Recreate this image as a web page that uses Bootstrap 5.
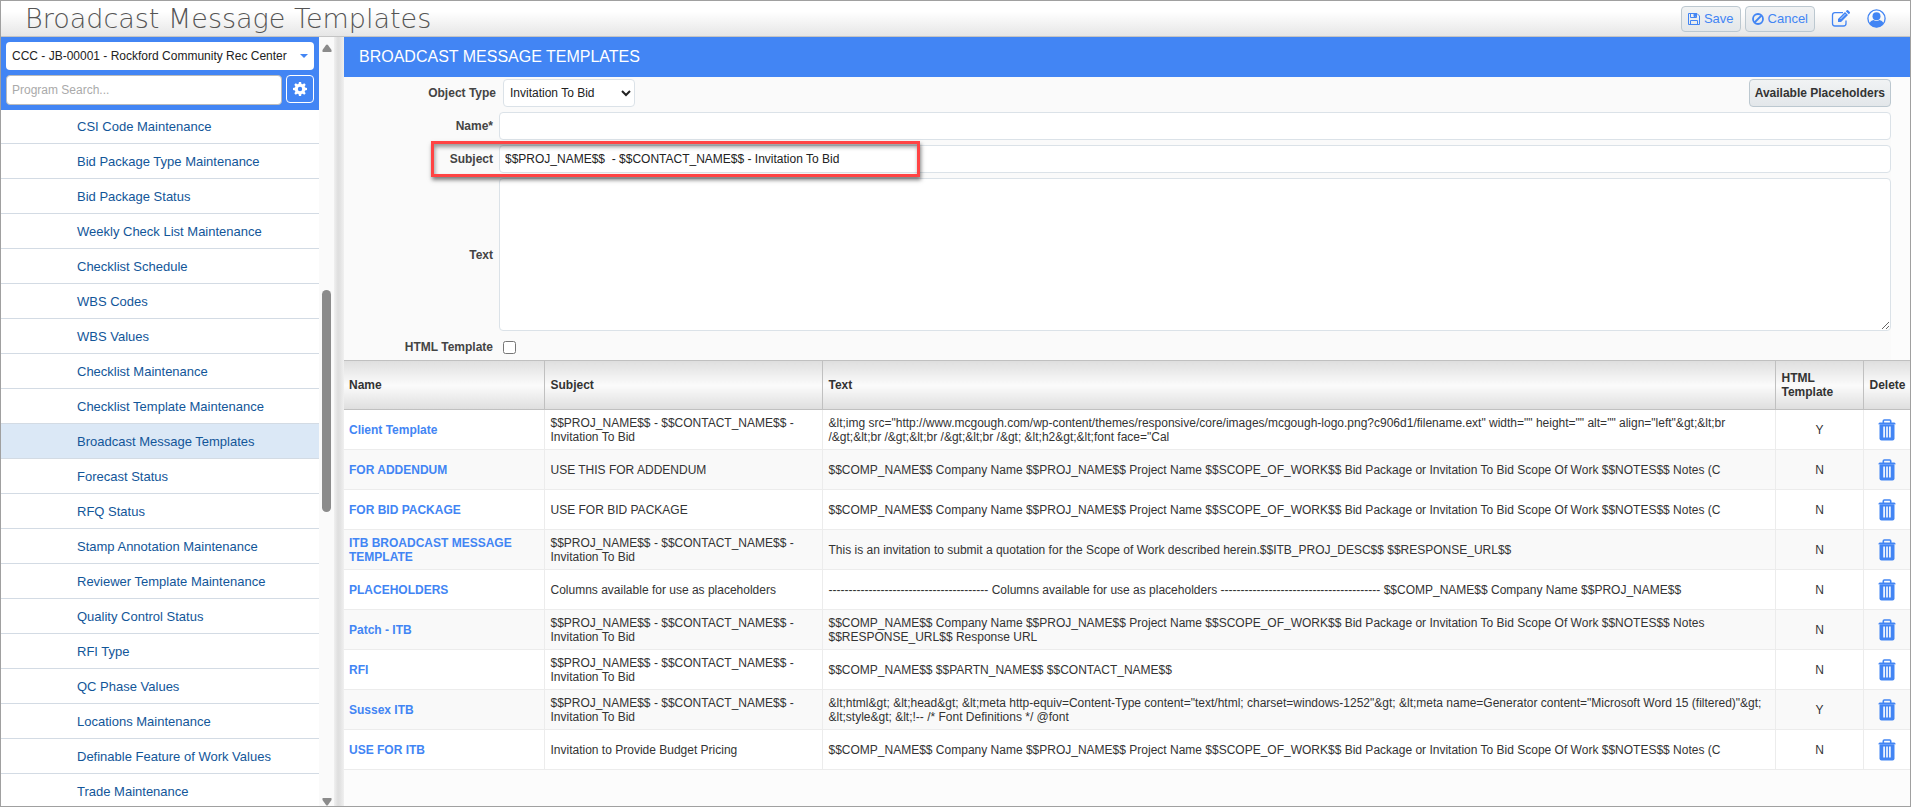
<!DOCTYPE html>
<html lang="en">
<head>
<meta charset="utf-8">
<meta name="viewport" content="width=device-width, initial-scale=1">
<title>Broadcast Message Templates</title>
<link rel="stylesheet" href="https://cdn.jsdelivr.net/npm/bootstrap@5.3.0/dist/css/bootstrap.min.css">
<style>
:root { --brand: #4285f4; --edge: #a0a0a0; }
body { font-family: "Liberation Sans", Arial, sans-serif; font-size: 12px; line-height: 14px; color: #333; background: #fcfcfc; }
.app-frame { border: 1px solid var(--edge); }
.app-header { height: 36px; border-bottom: 1px solid #c4c4c4; background: linear-gradient(#fff 30%, #e6e6e6); }
.app-title { font-family: "DejaVu Sans", sans-serif; font-weight: 200; font-size: 27px; line-height: 34px; color: #555; }
.tool-btn { height: 26px; padding: 0 6px; font-size: 13px; line-height: 14px; color: var(--brand); background: linear-gradient(#f1f3f4, #e3e7ea); border: 1px solid #bcc8d0; border-radius: 4px; }
.icon-btn { color: var(--brand); padding: 0; border: 0; background: none; }
.side-panel { width: 318px; background: #fff; }
.side-top { background: var(--brand); padding: 5px; }
.side-tools { margin-top: 5px; }
.job-picker { height: 28px; font-size: 12px; line-height: 18px; padding: 0 6px; color: #222; background: #fff; border: 0; border-radius: 4px; }
.prog-search { height: 30px; font-size: 12px; padding: 0 5px; border: 1px solid #bbb; border-radius: 4px; }
.prog-search::placeholder { color: #aaa; }
.gear-btn { width: 28px; height: 28px; padding: 0; color: #fff; background: none; border: 1px solid #fff; border-radius: 4px; }
.side-link { display: block; height: 35px; padding: 10px 0 0 76px; font-size: 13px; line-height: 16px; color: #125699; text-decoration: none; border-bottom: 1px solid #d3dbe4; }
.side-link.current { background: #dbe8f6; }
.side-list { margin-top: -1px; }
.scroll-rail { width: 15px; background: #fafafa; padding: 7px 0 0; }
.scroll-thumb { width: 9px; height: 222px; border-radius: 5px; background: #8b8b8b; }
.scroll-space { flex: 238 0 0; }
.scroll-rest { flex: 285 0 0; }
.splitter { width: 10px; background: linear-gradient(90deg, #f0f0f0, #dedede 40%, #e2e2e2 60%, #f0f0f0); }
.page-title { height: 40px; padding: 0 15px; font-size: 16px; line-height: 40px; color: #fff; background: var(--brand); }
.form-area { background: #fafafa; margin-right: 19px; padding-top: 2px; }
.field-row { margin-bottom: 5px; }
.check-row { padding: 9px 0 6px; }
.field-label { width: 155px; padding-right: 6px; text-align: right; font-weight: 700; color: #444; }
.field-label.near { padding-right: 3px; }
.field-box { font-size: 12px; line-height: 14px; color: #222; padding: 0 5px; border: 1px solid #dbe2e8; border-radius: 4px; background: #fff; }
.field-line { height: 28px; }
.field-area { height: 153px; }
.type-select { width: 132px; height: 28px; padding: 0 2px; }
.tpl-check { width: 13px; height: 13px; }
.avail-btn { height: 28px; padding: 0 5px; font-size: 12px; font-weight: 700; color: #333; background: linear-gradient(#f1f3f4, #e3e7ea); border: 1px solid #bcc8d0; border-radius: 4px; }
.callout-box { position: absolute; left: 87px; top: -4px; width: 489px; height: 36px; border: 3px solid #f44; box-shadow: 1px 3px 4px rgba(0,0,0,.5), inset 1px 3px 4px rgba(0,0,0,.4); pointer-events: none; z-index: 2; }
.tpl-table { table-layout: fixed; width: 100%; border-collapse: collapse; background: #fff; }
.tpl-table th { height: 49px; padding: 0 2px 0 6px; color: #333; border: 1px solid #c0c0c0; background: linear-gradient(#dfdfdf, #fbfbfb 50%, #dedede); }
.tpl-table td { height: 40px; padding: 0 5px 0 6px; border: 1px solid #ececec; }
.tpl-table tr > :first-child { border-left: 0; padding-left: 5px; }
.tpl-table tr > :last-child { border-right: 0; }
.tpl-table tbody tr:nth-child(even) { background: #f9f9f9; }
.tpl-table a { color: var(--brand); font-weight: 700; text-decoration: none; }
.c-name { width: 200px; } .c-subj { width: 278px; } .c-html { width: 88px; } .c-del { width: 47px; }
</style>
</head>
<body>
<svg class="d-none">
  <symbol id="trash" viewBox="0 0 18 22">
    <path fill="none" stroke="currentColor" stroke-width="1.6" d="M5.300 4V2q0-1 1-1h5.400q1 0 1 1v2"/>
    <path fill="currentColor" d="M1.500 3.500h15l1.500 1.700H0z"/>
    <path fill="currentColor" d="M1.500 5.200h15V19.500q0 2-2 2h-11q-2 0-2-2z"/>
    <path stroke="#fff" stroke-width="1.600" d="M6.100 7.500v11M9 7.500v11M11.900 7.500v11"/>
  </symbol>
</svg>
<div class="app-frame vh-100 d-flex flex-column overflow-hidden">
  <header class="app-header d-flex align-items-center flex-shrink-0">
    <h1 class="app-title m-0 ms-4">Broadcast Message Templates</h1>
    <div class="ms-auto d-flex align-items-center pe-4">
      <button type="button" class="tool-btn me-1 d-flex align-items-center gap-1">
        <svg width="12" height="12" viewBox="0 0 12 12" fill="none" stroke="currentColor"><path d="M.5.5h8.500l2.500 2.500v8.500H.5zM2.500.5v4h6v-4M2.500 11.500V7.500h7v4"/><path fill="currentColor" d="M6 1h1.500v2.500H6z"/></svg>Save</button>
      <button type="button" class="tool-btn d-flex align-items-center gap-1">
        <svg width="12" height="12" viewBox="0 0 12 12" fill="none" stroke="currentColor" stroke-width="1.800"><circle cx="6" cy="6" r="5"/><path d="M9.500 2.500l-7 7"/></svg>Cancel</button>
      <button type="button" class="icon-btn ms-3 d-flex" aria-label="Edit">
        <svg width="20" height="18" viewBox="0 0 20 18"><path fill="none" stroke="currentColor" stroke-width="1.300" d="M12 2.700H4Q1.500 2.700 1.500 5v8.500Q1.500 16 4 16h8.500q2.500 0 2.500-2.500V10.500"/><path fill="currentColor" d="M7 9l7-7 3 3-7 7H7zM14.800 1.200l1-.9q.7-.5 1.300 0l1.700 1.700q.5.600 0 1.200l-1 1z"/><path stroke="#fff" stroke-width=".7" d="M9.500 9l5-5"/></svg></button>
      <button type="button" class="icon-btn ms-3 d-flex" aria-label="Account">
        <svg width="19" height="19" viewBox="0 0 19 19"><circle cx="9.500" cy="9.500" r="8.600" fill="none" stroke="currentColor" stroke-width="1.300"/><circle cx="9.500" cy="7.300" r="4" fill="currentColor"/><path fill="currentColor" d="M2.500 14q1.200-2.600 4-2.900Q9.500 13 12.500 11.100q2.800.3 4 2.900-2.500 4.300-7 4.300T2.500 14z"/></svg></button>
    </div>
  </header>
  <div class="d-flex flex-grow-1 overflow-hidden">
    <nav class="side-panel flex-shrink-0 d-flex flex-column overflow-hidden" aria-label="Programs">
      <div class="side-top flex-shrink-0">
        <button type="button" class="job-picker w-100 d-flex align-items-center justify-content-between text-nowrap"><span>CCC - JB-00001 - Rockford Community Rec Center</span><svg width="8" height="4" viewBox="0 0 8 4"><path fill="#4285f4" d="M0 0h8L4 4z"/></svg></button>
        <div class="side-tools d-flex gap-1">
          <input class="prog-search flex-grow-1" type="text" placeholder="Program Search..." aria-label="Program Search">
          <button type="button" class="gear-btn" aria-label="Settings"><svg width="14" height="14" viewBox="0 0 16 16"><path fill="currentColor" fill-rule="evenodd" d="M6.800 0h2.400l.5 2.200 1.300.5 1.900-1.200 1.600 1.600-1.200 1.900.5 1.300 2.200.5v2.400l-2.200.5-.5 1.300 1.200 1.900-1.600 1.600-1.900-1.200-1.300.5-.5 2.200H6.800l-.5-2.200-1.300-.5-1.900 1.200-1.600-1.600 1.200-1.900-.5-1.300L0 9.200V6.800l2.200-.5.5-1.300-1.200-1.900 1.600-1.600L5 2.700l1.300-.5zM8 5.500a2.500 2.500 0 1 0 0 5 2.500 2.500 0 0 0 0-5z"/></svg></button>
        </div>
      </div>
      <div class="side-list">
        <a class="side-link" href="#">CSI Code Maintenance</a>
        <a class="side-link" href="#">Bid Package Type Maintenance</a>
        <a class="side-link" href="#">Bid Package Status</a>
        <a class="side-link" href="#">Weekly Check List Maintenance</a>
        <a class="side-link" href="#">Checklist Schedule</a>
        <a class="side-link" href="#">WBS Codes</a>
        <a class="side-link" href="#">WBS Values</a>
        <a class="side-link" href="#">Checklist Maintenance</a>
        <a class="side-link" href="#">Checklist Template Maintenance</a>
        <a class="side-link current" href="#" aria-current="page">Broadcast Message Templates</a>
        <a class="side-link" href="#">Forecast Status</a>
        <a class="side-link" href="#">RFQ Status</a>
        <a class="side-link" href="#">Stamp Annotation Maintenance</a>
        <a class="side-link" href="#">Reviewer Template Maintenance</a>
        <a class="side-link" href="#">Quality Control Status</a>
        <a class="side-link" href="#">RFI Type</a>
        <a class="side-link" href="#">QC Phase Values</a>
        <a class="side-link" href="#">Locations Maintenance</a>
        <a class="side-link" href="#">Definable Feature of Work Values</a>
        <a class="side-link" href="#">Trade Maintenance</a>
      </div>
    </nav>
    <div class="scroll-rail flex-shrink-0 d-flex flex-column align-items-center" aria-hidden="true">
      <svg width="10" height="8" viewBox="0 0 10 8" class="flex-shrink-0"><path fill="#8b8b8b" d="M4 1q1-1 2 0l3.500 5q.5 2-.5 2H1q-1 0-.5-2z"/></svg>
      <div class="scroll-space"></div>
      <div class="scroll-thumb flex-shrink-0"></div>
      <div class="scroll-rest"></div>
      <svg width="10" height="8" viewBox="0 0 10 8" class="flex-shrink-0"><path fill="#8b8b8b" d="M4 7q1 1 2 0l3.500-5q.5-2-.5-2H1Q0 0 .5 2z"/></svg>
    </div>
    <div class="splitter flex-shrink-0"></div>
    <main class="flex-grow-1 overflow-hidden">
      <h2 class="page-title m-0">BROADCAST MESSAGE TEMPLATES</h2>
      <form class="form-area">
        <div class="field-row d-flex align-items-center">
          <label class="field-label near" for="otype">Object Type</label>
          <select class="field-box type-select ms-1" id="otype"><option>Invitation To Bid</option></select>
          <button type="button" class="avail-btn ms-auto">Available Placeholders</button>
        </div>
        <div class="field-row d-flex align-items-center">
          <label class="field-label" for="tname">Name*</label>
          <input class="field-box field-line flex-grow-1" type="text" id="tname">
        </div>
        <div class="field-row d-flex align-items-center position-relative">
          <label class="field-label" for="tsubj">Subject</label>
          <input class="field-box field-line flex-grow-1" type="text" id="tsubj" value="$$PROJ_NAME$$  - $$CONTACT_NAME$$ - Invitation To Bid">
          <div class="callout-box"></div>
        </div>
        <div class="d-flex align-items-center">
          <label class="field-label" for="ttext">Text</label>
          <textarea class="field-box field-area flex-grow-1" id="ttext"></textarea>
        </div>
        <div class="check-row d-flex align-items-center">
          <label class="field-label" for="thtml">HTML Template</label>
          <input class="tpl-check m-0 ms-1" type="checkbox" id="thtml">
        </div>
      </form>
      <table class="tpl-table">
        <colgroup><col class="c-name"><col class="c-subj"><col><col class="c-html"><col class="c-del"></colgroup>
        <thead><tr><th>Name</th><th>Subject</th><th>Text</th><th>HTML Template</th><th>Delete</th></tr></thead>
        <tbody>
          <tr><td><a href="#">Client Template</a></td><td>$$PROJ_NAME$$ - $$CONTACT_NAME$$ - Invitation To Bid</td><td>&amp;lt;img src="http://www.mcgough.com/wp-content/themes/responsive/core/images/mcgough-logo.png?c906d1/filename.ext" width="" height="" alt="" align="left"&amp;gt;&amp;lt;br /&amp;gt;&amp;lt;br /&amp;gt;&amp;lt;br /&amp;gt;&amp;lt;br /&amp;gt; &amp;lt;h2&amp;gt;&amp;lt;font face="Cal</td><td class="text-center">Y</td><td><button type="button" class="icon-btn d-flex mx-auto" aria-label="Delete"><svg width="18" height="22"><use href="#trash"/></svg></button></td></tr>
          <tr><td><a href="#">FOR ADDENDUM</a></td><td>USE THIS FOR ADDENDUM</td><td>$$COMP_NAME$$ Company Name $$PROJ_NAME$$ Project Name $$SCOPE_OF_WORK$$ Bid Package or Invitation To Bid Scope Of Work $$NOTES$$ Notes (C</td><td class="text-center">N</td><td><button type="button" class="icon-btn d-flex mx-auto" aria-label="Delete"><svg width="18" height="22"><use href="#trash"/></svg></button></td></tr>
          <tr><td><a href="#">FOR BID PACKAGE</a></td><td>USE FOR BID PACKAGE</td><td>$$COMP_NAME$$ Company Name $$PROJ_NAME$$ Project Name $$SCOPE_OF_WORK$$ Bid Package or Invitation To Bid Scope Of Work $$NOTES$$ Notes (C</td><td class="text-center">N</td><td><button type="button" class="icon-btn d-flex mx-auto" aria-label="Delete"><svg width="18" height="22"><use href="#trash"/></svg></button></td></tr>
          <tr><td><a href="#">ITB BROADCAST MESSAGE TEMPLATE</a></td><td>$$PROJ_NAME$$ - $$CONTACT_NAME$$ - Invitation To Bid</td><td>This is an invitation to submit a quotation for the Scope of Work described herein.$$ITB_PROJ_DESC$$ $$RESPONSE_URL$$</td><td class="text-center">N</td><td><button type="button" class="icon-btn d-flex mx-auto" aria-label="Delete"><svg width="18" height="22"><use href="#trash"/></svg></button></td></tr>
          <tr><td><a href="#">PLACEHOLDERS</a></td><td>Columns available for use as placeholders</td><td>---------------------------------------- Columns available for use as placeholders ---------------------------------------- $$COMP_NAME$$ Company Name $$PROJ_NAME$$</td><td class="text-center">N</td><td><button type="button" class="icon-btn d-flex mx-auto" aria-label="Delete"><svg width="18" height="22"><use href="#trash"/></svg></button></td></tr>
          <tr><td><a href="#">Patch - ITB</a></td><td>$$PROJ_NAME$$ - $$CONTACT_NAME$$ - Invitation To Bid</td><td>$$COMP_NAME$$ Company Name $$PROJ_NAME$$ Project Name $$SCOPE_OF_WORK$$ Bid Package or Invitation To Bid Scope Of Work $$NOTES$$ Notes $$RESPONSE_URL$$ Response URL</td><td class="text-center">N</td><td><button type="button" class="icon-btn d-flex mx-auto" aria-label="Delete"><svg width="18" height="22"><use href="#trash"/></svg></button></td></tr>
          <tr><td><a href="#">RFI</a></td><td>$$PROJ_NAME$$ - $$CONTACT_NAME$$ - Invitation To Bid</td><td>$$COMP_NAME$$ $$PARTN_NAME$$ $$CONTACT_NAME$$</td><td class="text-center">N</td><td><button type="button" class="icon-btn d-flex mx-auto" aria-label="Delete"><svg width="18" height="22"><use href="#trash"/></svg></button></td></tr>
          <tr><td><a href="#">Sussex ITB</a></td><td>$$PROJ_NAME$$ - $$CONTACT_NAME$$ - Invitation To Bid</td><td>&amp;lt;html&amp;gt; &amp;lt;head&amp;gt; &amp;lt;meta http-equiv=Content-Type content="text/html; charset=windows-1252"&amp;gt; &amp;lt;meta name=Generator content="Microsoft Word 15 (filtered)"&amp;gt; &amp;lt;style&amp;gt; &amp;lt;!-- /* Font Definitions */ @font</td><td class="text-center">Y</td><td><button type="button" class="icon-btn d-flex mx-auto" aria-label="Delete"><svg width="18" height="22"><use href="#trash"/></svg></button></td></tr>
          <tr><td><a href="#">USE FOR ITB</a></td><td>Invitation to Provide Budget Pricing</td><td>$$COMP_NAME$$ Company Name $$PROJ_NAME$$ Project Name $$SCOPE_OF_WORK$$ Bid Package or Invitation To Bid Scope Of Work $$NOTES$$ Notes (C</td><td class="text-center">N</td><td><button type="button" class="icon-btn d-flex mx-auto" aria-label="Delete"><svg width="18" height="22"><use href="#trash"/></svg></button></td></tr>
        </tbody>
      </table>
    </main>
  </div>
</div>
<script src="https://cdn.jsdelivr.net/npm/bootstrap@5.3.0/dist/js/bootstrap.bundle.min.js"></script>
</body>
</html>
